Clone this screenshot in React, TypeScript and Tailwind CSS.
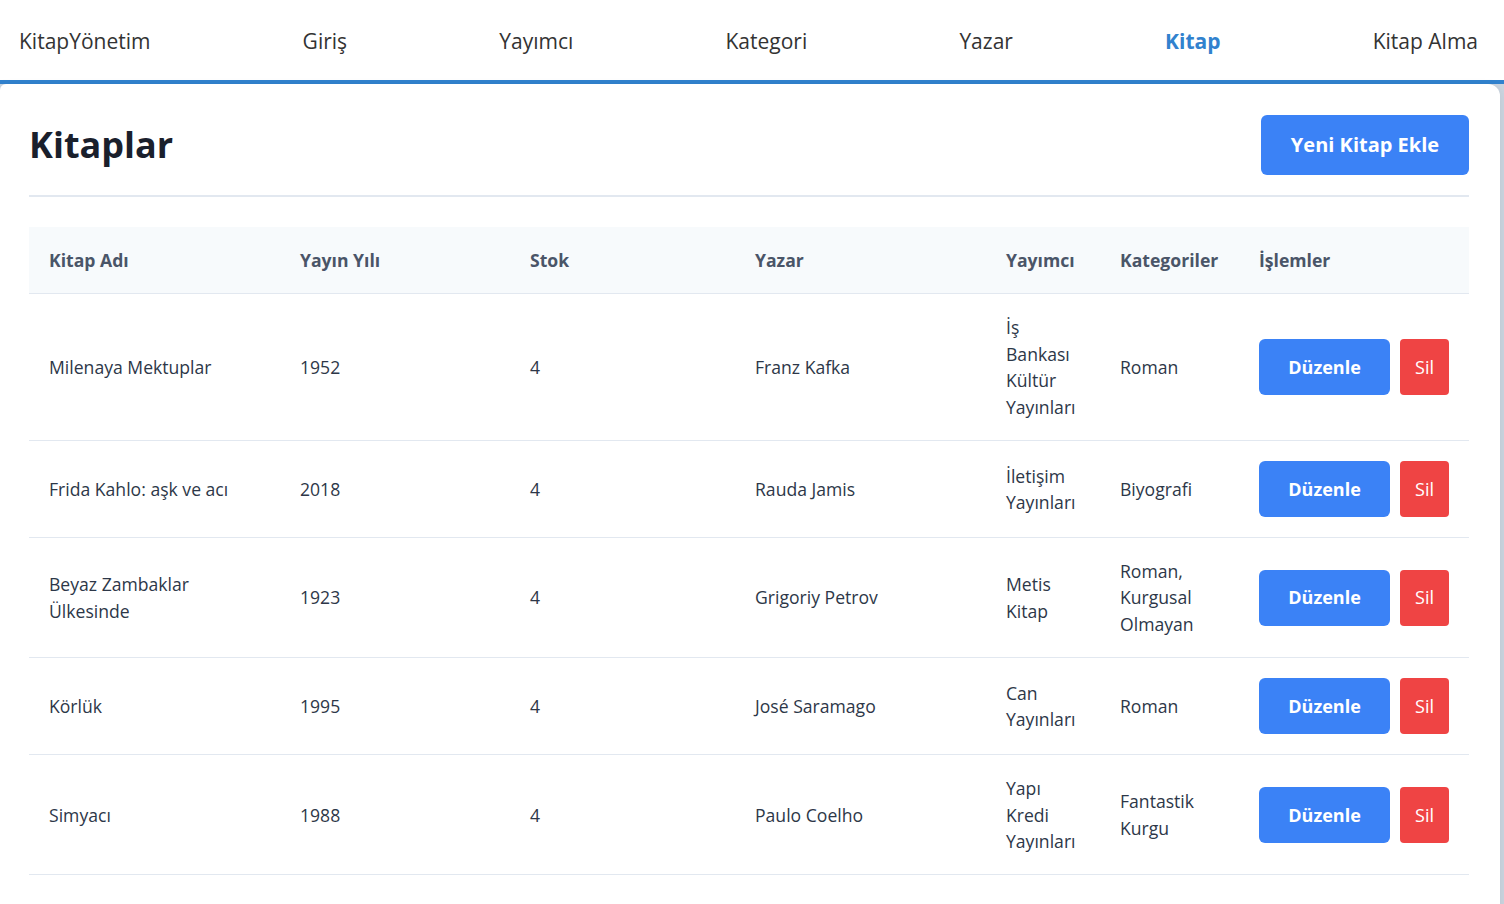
const navItems = ['Giriş', 'Yayımcı', 'Kategori', 'Yazar', 'Kitap', 'Kitap Alma'];

type Book = {
  name: string[];
  year: string;
  stock: string;
  author: string;
  publisher: string[];
  categories: string[];
};

const books: Book[] = [
  { name: ['Milenaya Mektuplar'], year: '1952', stock: '4', author: 'Franz Kafka', publisher: ['İş', 'Bankası', 'Kültür', 'Yayınları'], categories: ['Roman'] },
  { name: ['Frida Kahlo: aşk ve acı'], year: '2018', stock: '4', author: 'Rauda Jamis', publisher: ['İletişim', 'Yayınları'], categories: ['Biyografi'] },
  { name: ['Beyaz Zambaklar', 'Ülkesinde'], year: '1923', stock: '4', author: 'Grigoriy Petrov', publisher: ['Metis', 'Kitap'], categories: ['Roman,', 'Kurgusal', 'Olmayan'] },
  { name: ['Körlük'], year: '1995', stock: '4', author: 'José Saramago', publisher: ['Can', 'Yayınları'], categories: ['Roman'] },
  { name: ['Simyacı'], year: '1988', stock: '4', author: 'Paulo Coelho', publisher: ['Yapı', 'Kredi', 'Yayınları'], categories: ['Fantastik', 'Kurgu'] },
];

function Lines({ lines }: { lines: string[] }) {
  return (
    <>
      {lines.map((l, i) => (
        <span key={i} className="block whitespace-nowrap">
          {l}
        </span>
      ))}
    </>
  );
}

export default function App() {
  return (
    <div
      className="min-h-[904px] bg-[#cbd5e0] text-[#2d3748]"
      style={{ fontFamily: '"Open Sans", "Liberation Sans", sans-serif' }}
    >
      {/* Navbar */}
      <nav className="h-[84px] bg-white border-b-4 border-[#3182ce] flex items-center justify-between pt-[3px] pl-[19px] pr-[26px] text-[21px] text-[#333]">
        <span>KitapYönetim</span>
        {navItems.map((item) => (
          <a
            key={item}
            href="#"
            className={item === 'Kitap' ? 'font-bold text-[#3182ce]' : ''}
          >
            {item}
          </a>
        ))}
      </nav>

      {/* Card */}
      <div className="w-[1500px] bg-white rounded-tr-xl rounded-tl-md shadow-[0_2px_10px_rgba(0,0,0,0.08)] pt-[31px] pl-[29px] pr-[31px] pb-[40px]">
        <div className="flex items-center justify-between h-[60px]">
          <h1 className="text-[36px] font-bold text-[#1a202c]">Kitaplar</h1>
          <button className="w-[208px] h-[60px] bg-[#3b82f6] text-white text-[20px] font-bold rounded-md">
            Yeni Kitap Ekle
          </button>
        </div>
        <div className="mt-5 border-b-2 border-[#e2e8f0]" />

        <table className="mt-[30px] w-[1440px] table-fixed border-collapse text-[17.6px] leading-[26.4px]">
          <colgroup>
            <col className="w-[251px]" />
            <col className="w-[230px]" />
            <col className="w-[225px]" />
            <col className="w-[251px]" />
            <col className="w-[114px]" />
            <col className="w-[139px]" />
            <col className="w-[230px]" />
          </colgroup>
          <thead>
            <tr className="bg-[#f7fafc] border-b border-[#e2e8f0] text-left text-[#4a5568]">
              {['Kitap Adı', 'Yayın Yılı', 'Stok', 'Yazar', 'Yayımcı', 'Kategoriler', 'İşlemler'].map((h) => (
                <th key={h} className="px-5 py-5 font-bold whitespace-nowrap">
                  {h}
                </th>
              ))}
            </tr>
          </thead>
          <tbody>
            {books.map((b) => (
              <tr key={b.year} className="border-b border-[#e2e8f0] align-middle">
                <td className="px-5 py-5">
                  <Lines lines={b.name} />
                </td>
                <td className="px-5 py-5">{b.year}</td>
                <td className="px-5 py-5">{b.stock}</td>
                <td className="px-5 py-5">{b.author}</td>
                <td className="px-5 py-5">
                  <Lines lines={b.publisher} />
                </td>
                <td className="px-5 py-5">
                  <Lines lines={b.categories} />
                </td>
                <td className="px-5 py-5">
                  <div className="flex gap-[10px]">
                    <button className="w-[131px] h-14 bg-[#3b82f6] text-white text-[18px] font-bold rounded-md">
                      Düzenle
                    </button>
                    <button className="w-[49px] h-14 bg-[#ef4444] text-white text-[18px] font-medium rounded-[4px]">
                      Sil
                    </button>
                  </div>
                </td>
              </tr>
            ))}
          </tbody>
        </table>
      </div>
    </div>
  );
}
